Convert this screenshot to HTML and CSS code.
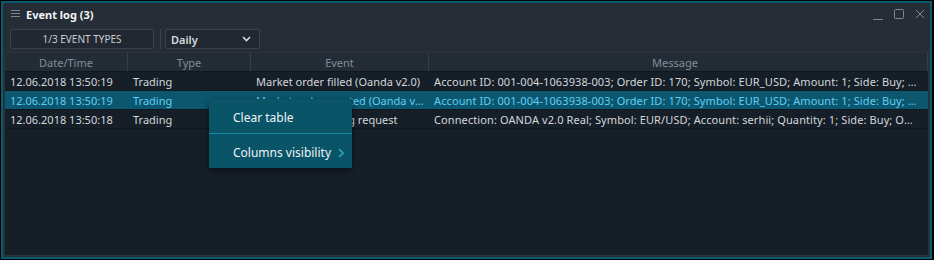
FILE: index.html
```html
<!DOCTYPE html>
<html lang="en">
  <head>
    <meta charset="UTF-8" />
    <title>Event log</title>
    <link rel="stylesheet" href="styles.css">
  </head>
  <body>
    <div class="panel">
      <header class="titlebar">
        <svg class="menu-icon" width="9" height="8" viewBox="0 0 9 8">
          <path d="M0 0.5h9M0 3.5h9M0 6.5h9" stroke="#7d8691" stroke-width="1" />
        </svg>
        <span class="title">Event log (3)</span>
        <div class="win-controls">
          <svg width="11" height="11" viewBox="0 0 11 11">
            <path d="M0 10.5h10" stroke="#7d8691" />
          </svg>
          <svg width="11" height="11" viewBox="0 0 11 11">
            <rect x="0.5" y="0.5" width="9" height="9" rx="1" fill="none" stroke="#7d8691" />
          </svg>
          <svg width="11" height="11" viewBox="0 0 11 11">
            <path d="M1 1l8 8M9 1l-8 8" stroke="#7d8691" />
          </svg>
        </div>
      </header>

      <div class="toolbar">
        <button class="types-btn">1/3 EVENT TYPES</button>
        <span class="divider"></span>
        <div class="select">
          <span>Daily</span>
          <svg width="9" height="6" viewBox="0 0 9 6">
            <path d="M1 1l3.5 3.5L8 1" fill="none" stroke="#d6dade" stroke-width="1.6" />
          </svg>
        </div>
      </div>

      <div class="table-area">
        <div class="row head">
          <div class="cell c-date">Date/Time</div>
          <div class="cell c-type">Type</div>
          <div class="cell c-event">Event</div>
          <div class="cell c-msg">Message</div>
        </div>
        <div class="row">
          <div class="cell c-date">12.06.2018 13:50:19</div>
          <div class="cell c-type">Trading</div>
          <div class="cell c-event">Market order filled (Oanda v2.0)</div>
          <div class="cell c-msg">Account ID: 001-004-1063938-003; Order ID: 170; Symbol: EUR_USD; Amount: 1; Side: Buy; Type: Market; Price: 1.17512</div>
        </div>
        <div class="row selected">
          <div class="cell c-date">12.06.2018 13:50:19</div>
          <div class="cell c-type">Trading</div>
          <div class="cell c-event">Market order created (Oanda v2.0)</div>
          <div class="cell c-msg">Account ID: 001-004-1063938-003; Order ID: 170; Symbol: EUR_USD; Amount: 1; Side: Buy; Type: Market; Price: 1.17512</div>
        </div>
        <div class="row">
          <div class="cell c-date">12.06.2018 13:50:18</div>
          <div class="cell c-type">Trading</div>
          <div class="cell c-event">Place order trading request</div>
          <div class="cell c-msg">Connection: OANDA v2.0 Real; Symbol: EUR/USD; Account: serhii; Quantity: 1; Side: Buy; Order type: Market</div>
        </div>

        <ul class="context-menu">
          <li>Clear table</li>
          <li class="sep"></li>
          <li class="sub">
            Columns visibility
            <svg class="chev" width="6" height="10" viewBox="0 0 6 10">
              <path d="M1 1l4 4-4 4" fill="none" stroke="#2aa3c6" stroke-width="1.6" />
            </svg>
          </li>
        </ul>
      </div>
    </div>
  </body>
</html>
```

FILE: styles.css
```css
* {
  margin: 0;
  padding: 0;
  box-sizing: border-box;
}

body {
  background-color: #000;
  font-family: "Noto Sans", "DejaVu Sans", sans-serif;
  font-size: 11px;
  color: #d3d7db;
}

.panel {
  margin: 1px 2px 1px 1px;
  height: 258px;
  border: 2px solid #0b5b70;
  background-color: #262d37;
  display: flex;
  flex-direction: column;
  padding: 0 1px 1px 1px;
}

.titlebar {
  height: 22px;
  display: flex;
  align-items: center;
  padding-left: 7px;
}

.menu-icon {
  margin-right: 6px;
}

.title {
  color: #f2f4f6;
  font-weight: bold;
  font-size: 11px;
}

.win-controls {
  margin-left: auto;
  display: flex;
  gap: 10px;
  padding-right: 3px;
}

.toolbar {
  height: 27px;
  display: flex;
  align-items: flex-start;
  padding: 4px 0 0 6px;
}

.types-btn {
  width: 144px;
  height: 20px;
  background-color: #212831;
  border: 1px solid #39424d;
  border-radius: 2px;
  color: #c9ced4;
  font-family: inherit;
  font-size: 10px;
}

.divider {
  width: 1px;
  height: 20px;
  background-color: #39424d;
  margin: 0 4px 0 6px;
}

.select {
  width: 95px;
  height: 20px;
  background-color: #212831;
  border: 1px solid #39424d;
  border-radius: 2px;
  display: flex;
  align-items: center;
  justify-content: space-between;
  padding: 0 8px 0 5px;
  color: #d6dade;
  font-weight: 600;
}

.table-area {
  flex: 1;
  position: relative;
  background-color: #161e28;
  border: 1px solid #2b333d;
  overflow: hidden;
}

.row {
  display: flex;
  height: 19px;
  border-bottom: 1px solid #101820;
}

.row.head {
  height: 19px;
  background-color: #232b35;
  border-bottom: 1px solid #10171f;
  color: #828d9a;
}

.row.head .cell {
  text-align: center;
  border-right: 1px solid #363e49;
}

.cell {
  padding: 1px 5px 0;
  line-height: 17px;
  white-space: nowrap;
  overflow: hidden;
  text-overflow: ellipsis;
}

.c-date {
  width: 123px;
}

.c-type {
  width: 123px;
}

.c-event {
  width: 178px;
}

.c-msg {
  flex: 1;
  padding-right: 11px;
  letter-spacing: 0.1px;
}

.row.head .c-msg {
  letter-spacing: 0;
}

.row.selected {
  background-color: #0b5770;
  color: #62cdef;
}

.context-menu {
  position: absolute;
  left: 204px;
  top: 46px;
  width: 143px;
  list-style: none;
  background-color: #0a5468;
  box-shadow: 0 2px 6px rgba(0, 0, 0, 0.5);
  color: #f0f3f5;
  font-size: 12px;
  padding: 6px 0 2px;
}

.context-menu li {
  height: 26px;
  line-height: 26px;
  padding-left: 24px;
  display: flex;
  align-items: center;
}

.context-menu li.sep {
  height: 1px;
  margin: 2px 0 6px;
  background-color: #1985a2;
}

.context-menu .chev {
  margin-left: 7px;
}
```
